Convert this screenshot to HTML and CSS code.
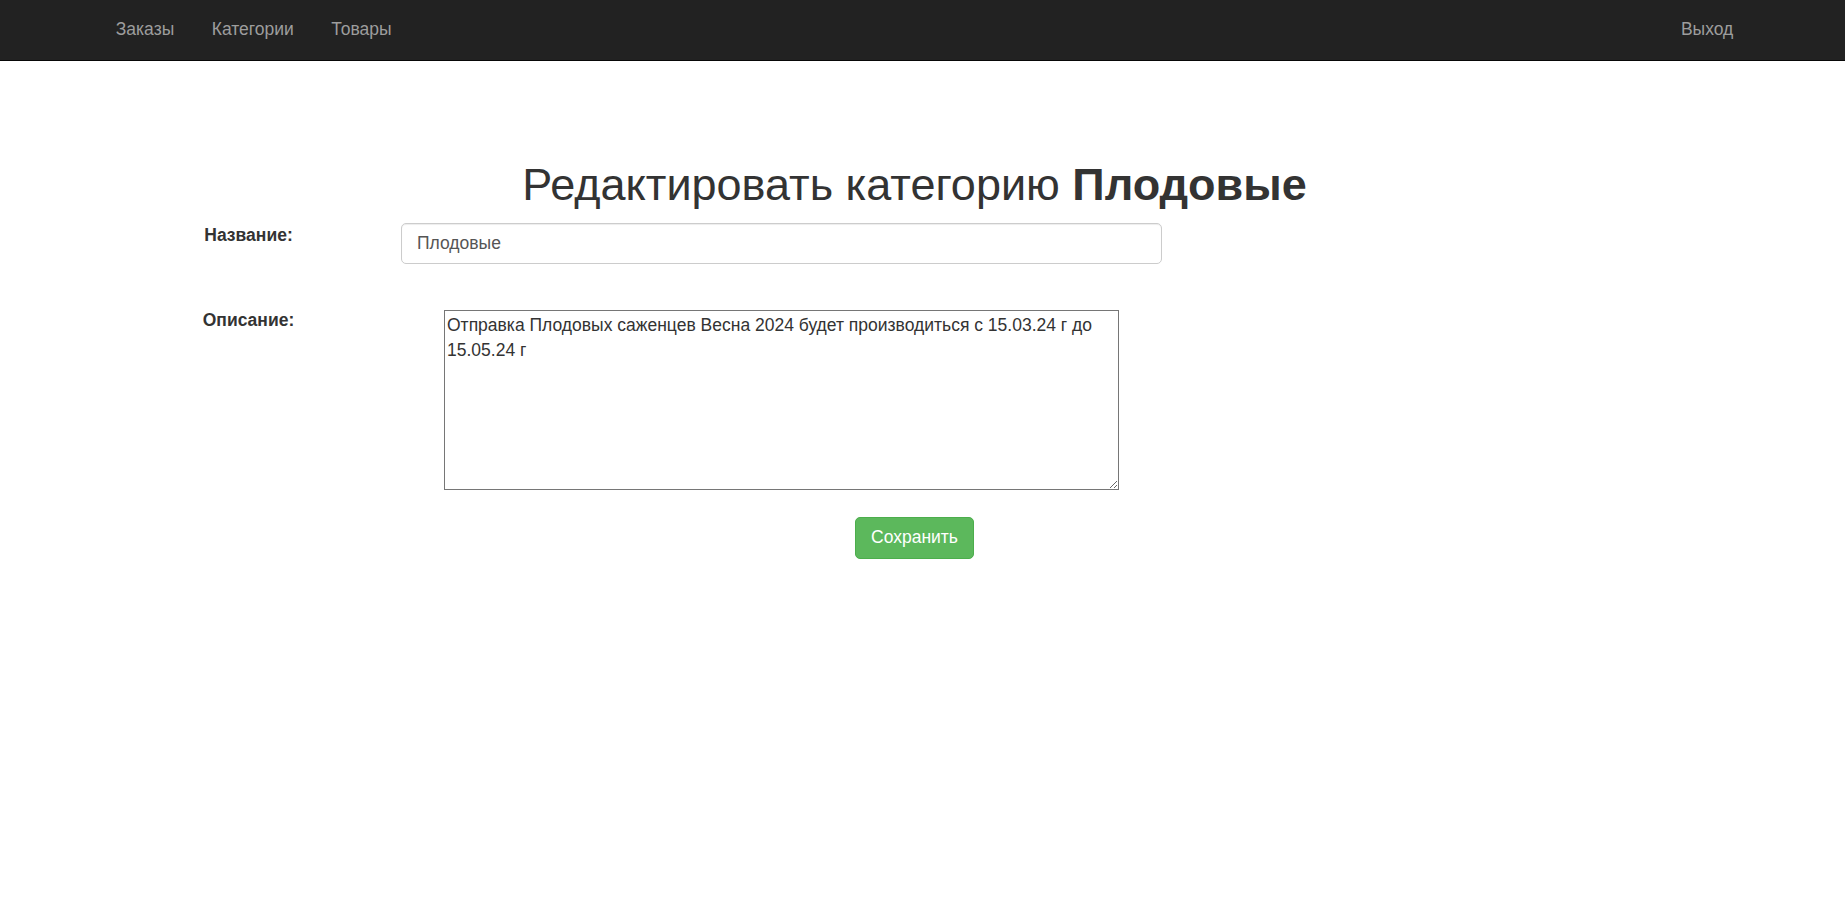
FILE: index.html
```html
<!DOCTYPE html>
<html lang="ru">
<head>
<meta charset="utf-8">
<title>Редактировать категорию</title>
<link rel="stylesheet" href="styles.css">
</head>
<body>
<nav class="navbar">
  <ul class="nav-left">
    <li><a href="#">Заказы</a></li>
    <li><a href="#">Категории</a></li>
    <li><a href="#">Товары</a></li>
  </ul>
  <ul class="nav-right">
    <li><a href="#">Выход</a></li>
  </ul>
</nav>
<main class="page">
  <h1 class="title">Редактировать категорию <b>Плодовые</b></h1>
  <form class="edit-form">
    <div class="grid">
      <label class="label" for="name">Название:</label>
      <input class="input" id="name" type="text" value="Плодовые">
      <label class="label label-desc" for="desc">Описание:</label>
      <textarea class="textarea" id="desc">Отправка Плодовых саженцев Весна 2024 будет производиться с 15.03.24 г до 15.05.24 г</textarea>
    </div>
    <div class="actions">
      <button class="btn-save" type="submit">Сохранить</button>
    </div>
  </form>
</main>
</body>
</html>
```
FILE: styles.css
```css
html, body {
  margin: 0;
  padding: 0;
  background: #fff;
}
body {
  font-family: "Liberation Sans", Arial, Helvetica, sans-serif;
  font-size: 17.5px;
  line-height: 25px;
  color: #333;
}
.navbar {
  display: flex;
  justify-content: space-between;
  align-items: flex-start;
  height: 60px;
  background: #222;
  border-bottom: 1px solid #080808;
  padding: 0 93px 0 97px;
}
.navbar ul {
  display: flex;
  margin: 0;
  padding: 0;
  list-style: none;
}
.navbar a {
  display: block;
  padding: 16.5px 18.75px 18.5px;
  line-height: 25px;
  color: #9d9d9d;
  text-decoration: none;
}
.page {
  padding-right: 16px;
}
.title {
  margin: 99px 0 13px;
  font-size: 45px;
  line-height: 49.5px;
  font-weight: 400;
  text-align: center;
  color: #333;
}
.title b {
  font-weight: 700;
}
.grid {
  display: grid;
  grid-template-columns: 201px 865px;
  row-gap: 40px;
  margin-left: 148px;
  justify-items: center;
  align-items: start;
}
.label {
  font-weight: 700;
  text-align: center;
}
.label-desc {
  margin-top: 4px;
}
.input {
  box-sizing: border-box;
  width: 761px;
  height: 41px;
  padding: 7px 15px;
  font: inherit;
  color: #555;
  background: #fff;
  border: 1px solid #ccc;
  border-radius: 5px;
  box-shadow: inset 0 1px 1px rgba(0,0,0,.075);
  margin: 0;
}
.textarea {
  box-sizing: border-box;
  width: 675px;
  height: 180px;
  margin: 6px 0 0;
  padding: 2px;
  font: inherit;
  color: #333;
  border: 1px solid #767676;
  border-radius: 0;
  resize: both;
}
.actions {
  display: flex;
  justify-content: center;
  margin-top: 27px;
}
.btn-save {
  box-sizing: border-box;
  height: 42px;
  padding: 0 15px;
  font: inherit;
  color: #fff;
  background: #5cb85c;
  border: 1px solid #4cae4c;
  border-radius: 5px;
  cursor: pointer;
}
```
